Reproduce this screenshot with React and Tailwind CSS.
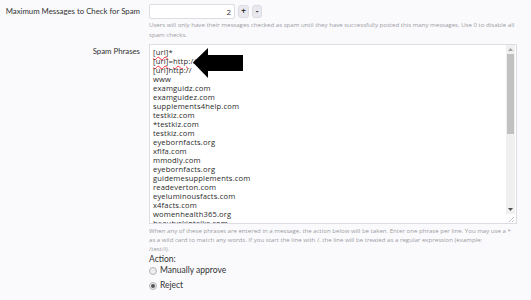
import React from 'react';

const phrases = [
  'www',
  'examguidz.com',
  'examguidez.com',
  'supplements4help.com',
  'testkiz.com',
  '*testkiz.com',
  'testkiz.com',
  'eyebornfacts.org',
  'xflfa.com',
  'mmodly.com',
  'eyebornfacts.org',
  'guidemesupplements.com',
  'readeverton.com',
  'eyeluminousfacts.com',
  'x4facts.com',
  'womenhealth365.org',
  'beautyskintalks.com',
];

const Squiggle = ({ children }) => (
  <span className="underline decoration-wavy decoration-red-500 decoration-[1px] underline-offset-1">{children}</span>
);

const Arrow = () => (
  <svg width="51" height="31" viewBox="0 0 51 31" className="absolute left-[43px] top-[3px]">
    <path d="M0 14.5 L15 0 L15 7 L50 7 L50 23 L15 23 L15 30 Z" fill="#000" />
  </svg>
);

const label = 'text-right pr-[9px] text-[7.8px] whitespace-nowrap';

const App = () => {
  return (
    <div
      className="w-[531px] h-[300px] overflow-hidden bg-[#fafafd] text-[#333]"
      style={{ fontFamily: '"Open Sans", "DejaVu Sans", sans-serif' }}
    >
      {/* max messages row */}
      <div className="flex pt-[4px]">
        <div className={`w-[149px] shrink-0 leading-[15px] ${label}`} style={{ fontFamily: 'Lato, sans-serif' }}>
          Maximum Messages to Check for Spam
        </div>
        <div className="flex-1 pr-[14px]">
          <div className="flex items-center gap-[3px]">
            <div className="w-[86px] h-[15px] bg-white border border-[#dcdce4] rounded-[2px] text-right pr-[3px] text-[8px] leading-[13px]">
              2
            </div>
            <div className="w-[11px] h-[13px] rounded-[3px] bg-[#e8e8ee] border border-[#dcdce2] text-[8px] leading-[10px] text-center font-bold">+</div>
            <div className="w-[10px] h-[13px] rounded-[3px] bg-[#e8e8ee] border border-[#dcdce2] text-[8px] leading-[10px] text-center font-bold">-</div>
          </div>
          <p className="mt-[1px] text-[6.1px] leading-[10px] text-[#9a9aa2] whitespace-nowrap">
            Users will only have their messages checked as spam until they have successfully posted this many messages. Use 0 to disable all
            <br />
            spam checks.
          </p>
        </div>
      </div>

      {/* spam phrases row */}
      <div className="flex mt-[4px]">
        <div className={`w-[149px] shrink-0 pt-[2px] leading-[10px] ${label}`} style={{ fontFamily: 'Lato, sans-serif' }}>
          Spam Phrases
        </div>
        <div className="flex-1 pr-[14px]">
          <div className="relative flex h-[180px] bg-white border border-[#dcdce4]">
            <div className="flex-1 pl-[3px] pt-[3px] overflow-hidden text-[7.6px] leading-[9px] text-[#2a2a2a] tracking-[0.15px]">
              <div><Squiggle>[url]</Squiggle>*</div>
              <div><Squiggle>[url]</Squiggle>=<Squiggle>http</Squiggle>://</div>
              <div>[url]http://</div>
              {phrases.map((p, i) => (
                <div key={i} className="whitespace-nowrap">{p}</div>
              ))}
              <Arrow />
            </div>
            <div className="w-[9px] flex flex-col bg-[#f0f0f0] mr-[1px]">
              <div className="h-[9px] flex items-center justify-center">
                <svg width="5" height="3" viewBox="0 0 5 3"><path d="M0 3 L2.5 0 L5 3 Z" fill="#a3a3a3" /></svg>
              </div>
              <div className="h-[80px] mx-[1px] bg-[#c1c1c1]" />
              <div className="flex-1" />
              <div className="h-[9px] flex items-center justify-center">
                <svg width="5" height="3" viewBox="0 0 5 3"><path d="M0 0 L5 0 L2.5 3 Z" fill="#505050" /></svg>
              </div>
              <div className="h-[9px] bg-white flex items-end justify-end pr-[1px] pb-[1px]">
                <svg width="6" height="6" viewBox="0 0 6 6"><path d="M6 1 L1 6 M6 4 L4 6" stroke="#aaa" strokeWidth="0.7" /></svg>
              </div>
            </div>
          </div>
          <p className="mt-[2px] text-[6.1px] leading-[9px] text-[#9a9aa2] whitespace-nowrap">
            When any of these phrases are entered in a message, the action below will be taken. Enter one phrase per line. You may use a *
            <br />
            as a wild card to match any words. If you start the line with /, the line will be treated as a regular expression (example:
            <br />
            /test/i).
          </p>
          <div style={{ fontFamily: 'Lato, sans-serif' }}>
            <div className="mt-[1px] text-[8.5px] leading-[11px]">Action:</div>
            <label className="flex items-center gap-[3px] text-[8.5px] leading-[11px]">
              <span className="w-[8px] h-[8px] rounded-full border border-[#b5b5b5] bg-[#ececec]" />
              Manually approve
            </label>
            <label className="mt-[4px] flex items-center gap-[3px] text-[8.5px] leading-[11px]">
              <span className="w-[8px] h-[8px] rounded-full border border-[#b5b5b5] bg-[#ececec] flex items-center justify-center">
                <span className="w-[4px] h-[4px] rounded-full bg-[#555]" />
              </span>
              Reject
            </label>
          </div>
        </div>
      </div>
    </div>
  );
};

export default App;
